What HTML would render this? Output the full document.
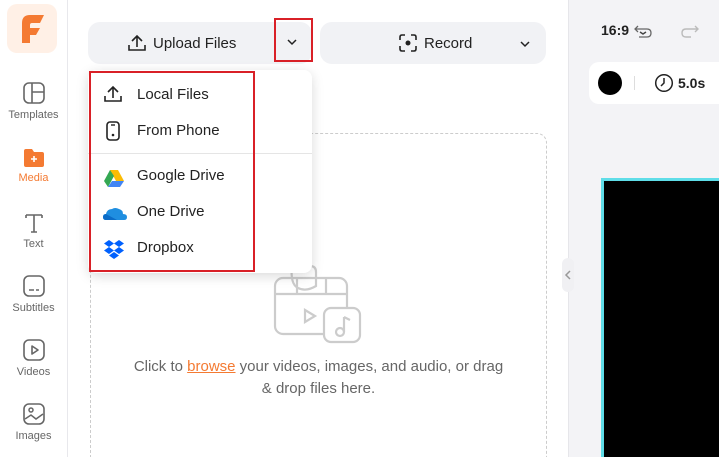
<!DOCTYPE html><html><head><style>
*{margin:0;padding:0;box-sizing:border-box}
html{width:719px;height:457px;overflow:hidden}
body{width:719px;height:457px;overflow:hidden;background:#fff;font-family:"Liberation Sans",sans-serif;position:relative;color:#222}
.abs{position:absolute}
.side{left:0;top:0;width:68px;height:457px;border-right:1px solid #e8e8ec;background:#fff}
.nav{position:absolute;left:0;width:67px;text-align:center;font-size:11px;color:#666}
.nav svg{display:block;margin:0 auto 4px}
.btn{background:#f1f2f5;border-radius:12px;height:42px;top:22px;font-size:15px;color:#222;display:flex;align-items:center}
.red{border:2px solid #d92027}
.menu{left:88px;top:70px;width:224px;height:203px;background:#fff;border-radius:8px;box-shadow:0 3px 12px rgba(0,0,0,.15)}
.item{position:absolute;left:49px;font-size:15px;color:#222}
.ic{position:absolute;left:15px}
</style></head><body>
<div class="abs side">
 <div class="abs" style="left:7px;top:4px;width:50px;height:49px;background:#fff0e6;border-radius:10px">
  <svg width="50" height="49"><path d="M15 39 V19 Q15 11 23 11 H37 L33 19 H25 Q23 19 23 21 V24 H33 L29 31 H23 V39 Z" fill="#f47a32"/></svg></div>
 <div class="nav" style="top:81px"><svg width="24" height="24"><rect x="2" y="2" width="20" height="20" rx="5" fill="none" stroke="#666" stroke-width="1.6"/><path d="M10 2V22M10 11H22" stroke="#666" stroke-width="1.6"/></svg>Templates</div>
 <div class="nav" style="top:146px;color:#f47a32"><svg width="24" height="22"><path d="M2 5Q2 3 4 3H10L12 6H20Q22 6 22 8V19Q22 21 20 21H4Q2 21 2 19Z" fill="#f47a32"/><path d="M12 10V16M9 13H15" stroke="#fff" stroke-width="1.6"/></svg>Media</div>
 <div class="nav" style="top:210px"><svg width="24" height="24"><path d="M4 5H20M12 5V22M4 5V8M20 5V8M9 22H15" stroke="#666" stroke-width="1.6" fill="none"/></svg>Text</div>
 <div class="nav" style="top:274px"><svg width="24" height="24"><rect x="2" y="2" width="20" height="20" rx="5" fill="none" stroke="#666" stroke-width="1.6"/><path d="M7 16H12M14 16H17" stroke="#666" stroke-width="1.6"/></svg>Subtitles</div>
 <div class="nav" style="top:338px"><svg width="24" height="24"><rect x="2" y="2" width="20" height="20" rx="5" fill="none" stroke="#666" stroke-width="1.6"/><path d="M10 8L16 12L10 16Z" fill="none" stroke="#666" stroke-width="1.6" stroke-linejoin="round"/></svg>Videos</div>
 <div class="nav" style="top:402px"><svg width="24" height="24"><rect x="2" y="2" width="20" height="20" rx="5" fill="none" stroke="#666" stroke-width="1.6"/><circle cx="9" cy="8" r="2" fill="none" stroke="#666" stroke-width="1.5"/><path d="M3 17L9 13L14 17L21 12" fill="none" stroke="#666" stroke-width="1.5"/></svg>Images</div>
</div>
<div class="abs" style="left:568px;top:0;width:151px;height:457px;background:#f3f3f6;border-left:1px solid #e6e6ea"></div>
<div class="abs" style="left:562px;top:258px;width:12px;height:34px;background:#f0f0f3;border-radius:6px"><svg width="12" height="34"><path d="M8 13L4 17L8 21" stroke="#999" stroke-width="1.5" fill="none"/></svg></div>
<div class="abs" style="left:601px;top:22px;font-size:14px;font-weight:bold;color:#222">16:9</div>
<svg class="abs" style="left:633px;top:22px" width="20" height="18"><path d="M5 4L2 7L5 10M2 7H14Q18 7 18 11Q18 15 14 15H6" fill="none" stroke="#666" stroke-width="1.3"/><path d="M7 10L10 12L13 10" fill="none" stroke="#444" stroke-width="1.5"/></svg>
<svg class="abs" style="left:679px;top:22px" width="22" height="18"><path d="M16 4L19 7L16 10M19 7H7Q3 7 3 11Q3 15 7 15H12" fill="none" stroke="#bbb" stroke-width="1.4"/></svg>
<div class="abs" style="left:589px;top:62px;width:140px;height:42px;background:#fff;border-radius:10px"></div>
<div class="abs" style="left:598px;top:71px;width:24px;height:24px;border-radius:50%;background:#000"></div>
<div class="abs" style="left:634px;top:76px;width:1px;height:14px;background:#ddd"></div>
<svg class="abs" style="left:654px;top:73px" width="20" height="20"><circle cx="10" cy="10" r="8.3" fill="none" stroke="#222" stroke-width="1.5"/><path d="M10 5V10L7 13" fill="none" stroke="#222" stroke-width="1.5"/></svg>
<div class="abs" style="left:678px;top:75px;font-size:14px;font-weight:bold">5.0s</div>
<div class="abs" style="left:601px;top:178px;width:130px;height:290px;background:#000;border:3px solid #5fdde8;border-right:none"></div>

<div class="abs btn" style="left:88px;width:224px"><svg style="margin-left:39px" width="20" height="20"><path d="M10 14V3M5 8L10 3L15 8M2 12V17H18V12" fill="none" stroke="#222" stroke-width="1.6"/></svg><span style="margin-left:6px">Upload Files</span></div>
<div class="abs red" style="left:274px;top:18px;width:39px;height:44px"></div>
<svg class="abs" style="left:286px;top:38px" width="12" height="8"><path d="M2 2L6 6L10 2" fill="none" stroke="#222" stroke-width="1.5"/></svg>
<div class="abs btn" style="left:320px;width:226px"><svg style="margin-left:78px" width="20" height="20"><path d="M2 7V4Q2 2 4 2H7M13 2H16Q18 2 18 4V7M18 13V16Q18 18 16 18H13M7 18H4Q2 18 2 16V13" fill="none" stroke="#222" stroke-width="1.6"/><circle cx="10" cy="10" r="2.5" fill="#222"/></svg><span style="margin-left:6px">Record</span></div>
<svg class="abs" style="left:519px;top:40px" width="12" height="8"><path d="M2 2L6 6L10 2" fill="none" stroke="#222" stroke-width="1.5"/></svg>

<div class="abs" style="left:90px;top:133px;width:457px;height:340px;border:1px dashed #ccc;border-radius:10px"></div>
<svg class="abs" style="left:272px;top:262px" width="92" height="82"><g fill="none" stroke="#ccc" stroke-width="2.2"><rect x="3" y="16" width="72" height="56" rx="8"/><path d="M3 32H75M25 16V32M54 16V32"/><path d="M33 48L43 54L33 60Z"/><rect x="52" y="46" width="36" height="34" rx="7" fill="#fff"/><path d="M72 55V70M72 55L78 58"/><circle cx="68" cy="70" r="4"/><path d="M20 4H38Q44 4 44 10V24Q34 30 26 26Q18 22 20 4Z"/></g></svg>
<div class="abs" style="left:90px;top:356px;width:457px;text-align:center;font-size:15px;color:#666;line-height:22px">Click to <span style="color:#f47a32;text-decoration:underline">browse</span> your videos, images, and audio, or drag<br>&amp; drop files here.</div>

<div class="abs menu">
 <svg class="ic" style="top:14px" width="20" height="20"><path d="M10 14V3M5 8L10 3L15 8M2 12V17H18V12" fill="none" stroke="#222" stroke-width="1.6"/></svg>
 <div class="item" style="top:16px">Local Files</div>
 <svg class="ic" style="top:50px" width="20" height="22"><rect x="4" y="2" width="12" height="18" rx="3" fill="none" stroke="#222" stroke-width="1.6"/><circle cx="10" cy="15" r="1.3" fill="#222"/><path d="M8 5H12" stroke="#222" stroke-width="1.4"/></svg>
 <div class="item" style="top:52px">From Phone</div>
 <div class="abs" style="left:0;top:83px;width:224px;height:1px;background:#e5e5e5"></div>
 <svg class="ic" style="top:98px" width="22" height="20"><path d="M7 2H15L21 13H13Z" fill="#fbbc04"/><path d="M7 2L1 13L5 19L11 8Z" fill="#34a853"/><path d="M5 19H17L21 13H9Z" fill="#4285f4"/></svg>
 <div class="item" style="top:97px">Google Drive</div>
 <svg class="ic" style="top:136px" width="24" height="16"><path d="M3 14Q0 14 0 11Q0 8 3 8Q4 3 9 3Q12 1 16 3Q20 4 20 8Q24 8 24 11Q24 14 21 14Z" fill="#1f8ee0"/><path d="M3 14Q0 14 0 11Q0 8 3 8L14 14Z" fill="#0b6cc7"/></svg>
 <div class="item" style="top:133px">One Drive</div>
 <svg class="ic" style="top:168px" width="22" height="22"><g fill="#0061fe"><path d="M6 2L1 5.5L6 9L11 5.5Z"/><path d="M16 2L11 5.5L16 9L21 5.5Z"/><path d="M6 9L1 12.5L6 16L11 12.5Z"/><path d="M16 9L11 12.5L16 16L21 12.5Z"/><path d="M11 14L6 17.5L11 21L16 17.5Z"/></g></svg>
 <div class="item" style="top:169px">Dropbox</div>
</div>
<div class="abs red" style="left:89px;top:71px;width:166px;height:201px"></div>
</body></html>
